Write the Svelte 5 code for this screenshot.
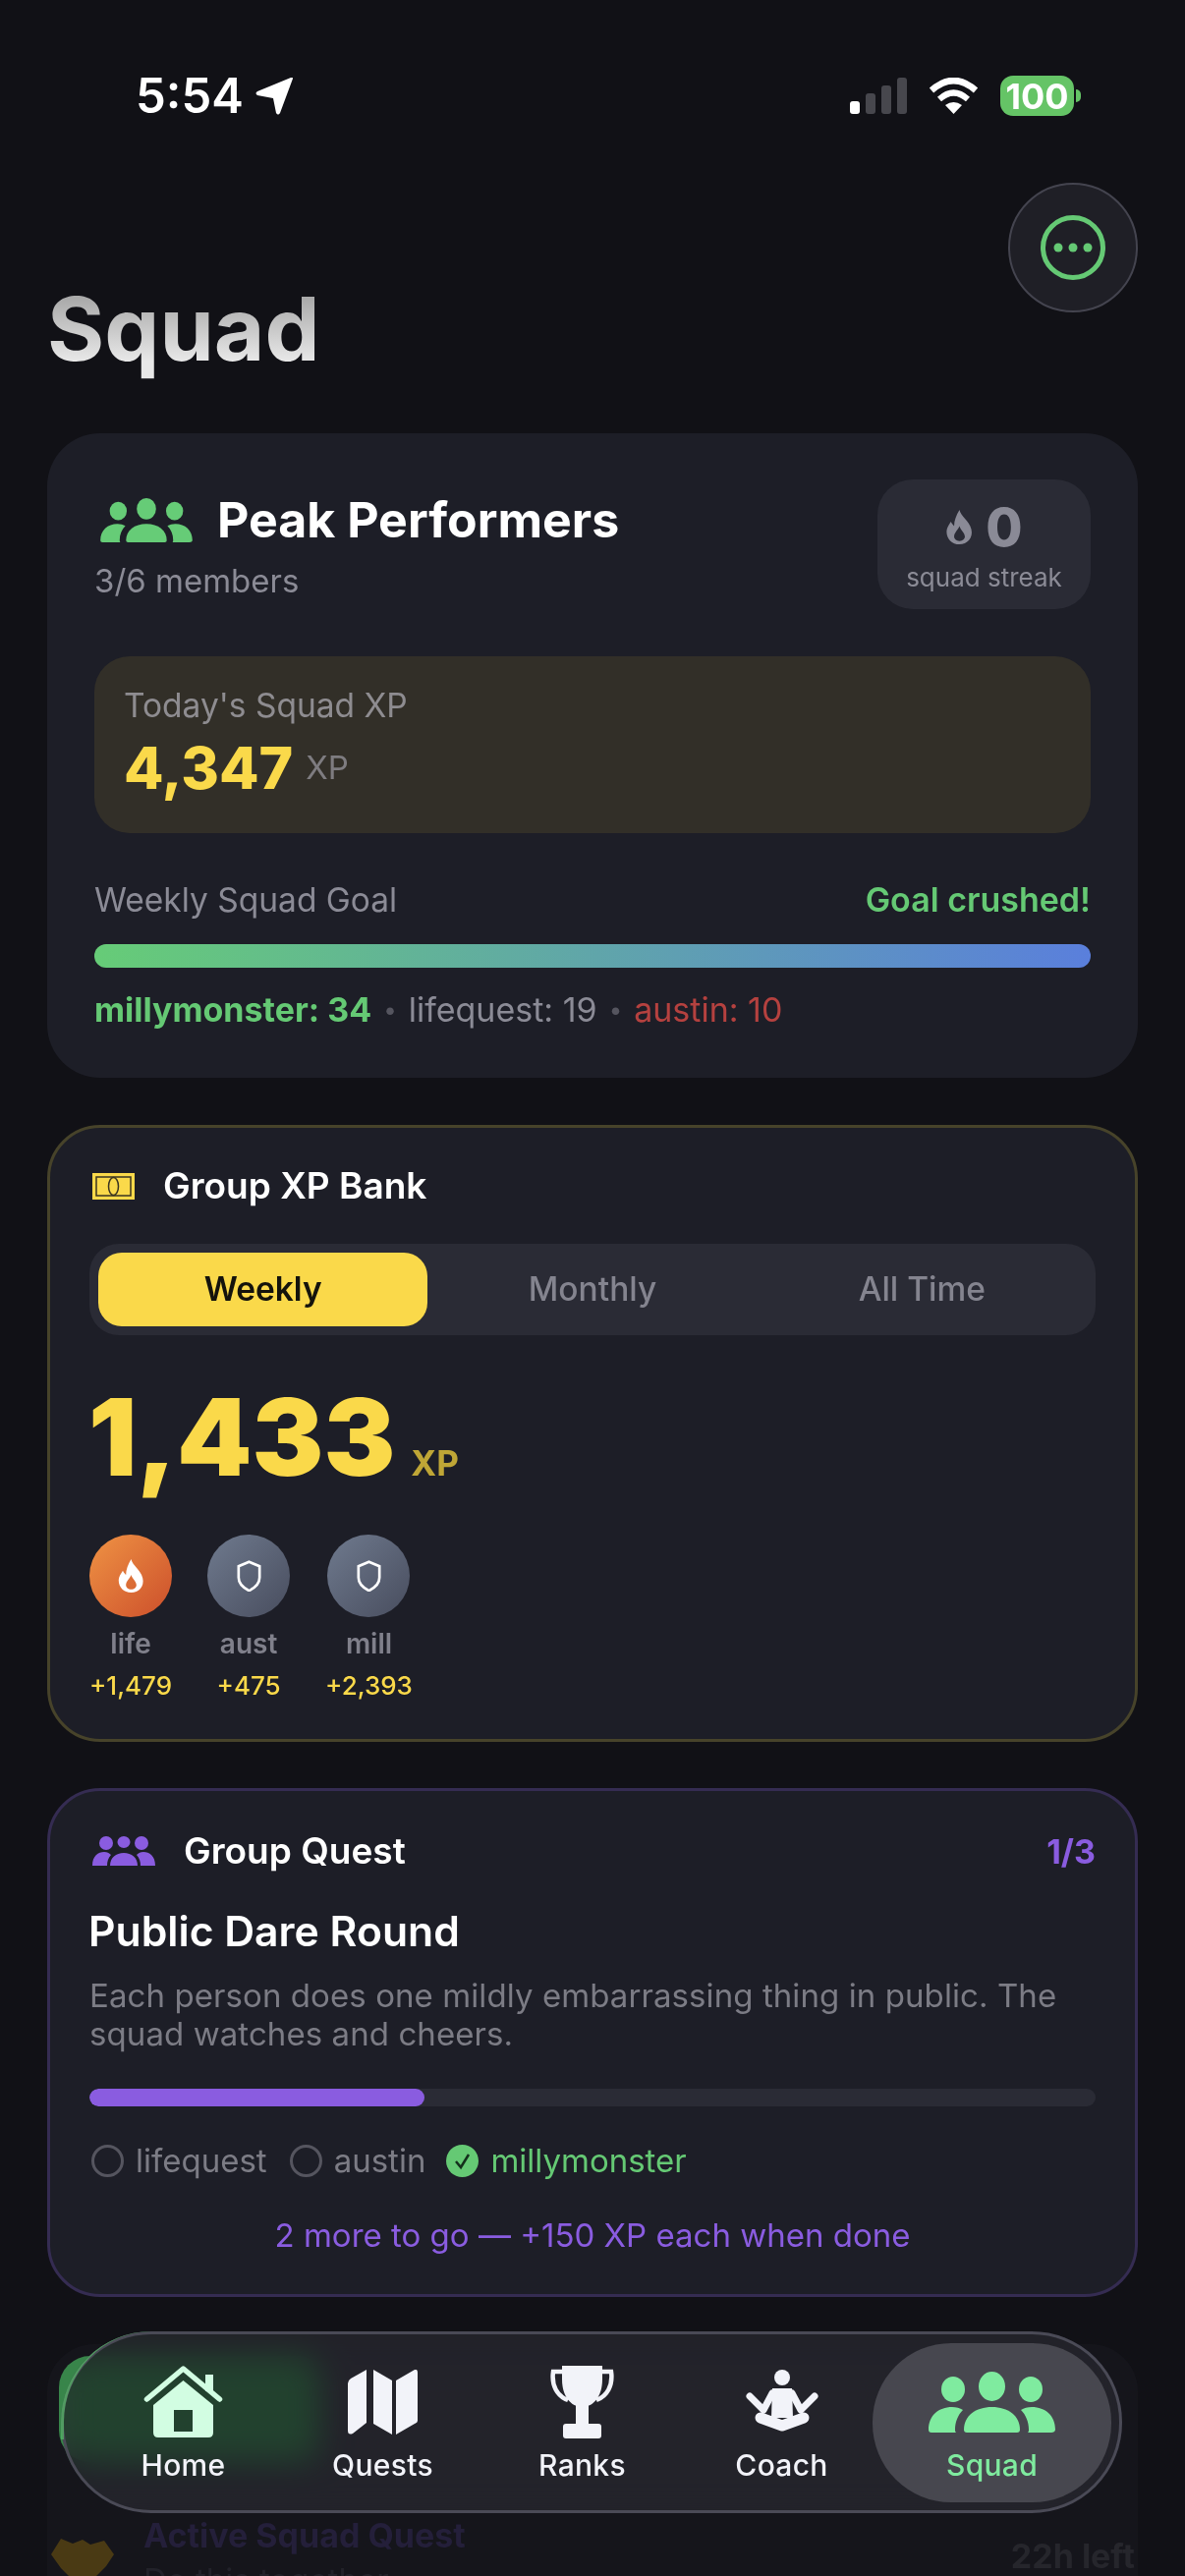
<!--
  Squad tab: status bar, header and three cards, with the floating tab bar
  over a fourth card that scrolls off underneath it.
-->
<script>
  const bankers = [
    { name: 'life', xp: '+1,479', hot: true },
    { name: 'aust', xp: '+475', hot: false },
    { name: 'mill', xp: '+2,393', hot: false },
  ];
</script>

{#snippet flame()}
  <path fill-rule="evenodd" d="M13 0c1 6 9 10 11 18 2 8-4 14-11 14S1 27 1 20c0-3 2-6 4-9 1 2 2 3 3 4 0-5 2-10 5-15zM13 15c-1 3-5 6-5 10 0 2 2 4 5 4s5-2 5-4c0-4-4-6-5-10z" />
{/snippet}

{#snippet people()}
  <ellipse cx="25" cy="18" rx="12" ry="13" />
  <ellipse cx="64.500" cy="15" rx="13.500" ry="15" />
  <ellipse cx="104" cy="18" rx="12" ry="13" />
  <path d="M36 59c0-14 12-23 28.500-23s28.500 9 28.500 23c0 2-1 3-3 3H39c-2 0-3-1-3-3z" />
  <path d="M0 59c0-14 10-23 24-23 4 0 8 1 11 3-5 5-8 12-8 20 0 1 0 2 1 3H3c-2 0-3-1-3-3z" />
  <path d="M129 59c0-14-10-23-24-23-4 0-8 1-11 3 5 5 8 12 8 20 0 1 0 2-1 3h24c2 0 4-1 4-3z" />
{/snippet}

<div class="screen">
  <div class="status">
    <div class="clock">
      <span>5:54</span>
      <svg width="39" height="38" viewBox="0 0 39 38" fill="#fff"><path d="M38 1 25 36q-2 3-4 0l-3-15L2 18q-3-2 0-4L36 0q2-1 2 1z" /></svg>
    </div>
    <div class="indicators">
      <div class="signal"><i class="on"></i><i></i><i></i><i></i></div>
      <svg width="51" height="37" viewBox="0 0 51 37" fill="none" stroke="#fff">
        <path d="M3 13Q25.500-7 48 13" stroke-width="6.500" />
        <path d="M11 22Q25.500 9 40 22" stroke-width="6" />
        <path d="M17 28Q25.500 22 34 28l-8.500 9z" fill="#fff" stroke="none" />
      </svg>
      <div class="battery"><span>100</span></div>
    </div>
  </div>

  <header>
    <h1>Squad</h1>
    <button class="more" aria-label="More">
      <svg width="66" height="66" viewBox="0 0 66 66">
        <circle cx="33" cy="33" r="30.500" fill="none" stroke="#65c974" stroke-width="5" />
        <circle cx="18" cy="33" r="4.500" fill="#65c974" />
        <circle cx="33" cy="33" r="4.500" fill="#65c974" />
        <circle cx="48" cy="33" r="4.500" fill="#65c974" />
      </svg>
    </button>
  </header>

  <section class="card team">
    <div class="team-top">
      <div>
        <div class="team-name">
          <svg class="peak" width="94" height="45" viewBox="0 0 129 62" fill="#66cc77">{@render people()}</svg>
          <h2>Peak Performers</h2>
        </div>
        <div class="members">3/6 members</div>
      </div>
      <div class="streak">
        <div class="streak-num">
          <svg width="29" height="35" viewBox="0 0 26 32" fill="#8a8a96">{@render flame()}</svg>
          <span>0</span>
        </div>
        <div class="streak-label">squad streak</div>
      </div>
    </div>

    <div class="today">
      <div class="today-label">Today's Squad XP</div>
      <div class="today-value"><b>4,347</b><span>XP</span></div>
    </div>

    <div class="goal-head">
      <span>Weekly Squad Goal</span>
      <b>Goal crushed!</b>
    </div>
    <div class="goal-bar"></div>
    <div class="goal-list">
      <b>millymonster: 34</b><i>•</i><span>lifequest: 19</span><i>•</i><em>austin: 10</em>
    </div>
  </section>

  <section class="card bank">
    <div class="bank-head">
      <svg width="43" height="27" viewBox="0 0 43 27">
        <rect width="43" height="27" fill="#fad94a" />
        <rect x="4" y="4" width="35" height="19" fill="none" stroke="#3a3420" stroke-width="1.500" />
        <ellipse cx="21.500" cy="13.500" rx="5" ry="9" fill="none" stroke="#3a3420" stroke-width="1.500" />
      </svg>
      <h3>Group XP Bank</h3>
    </div>
    <div class="tabs">
      <button class="active">Weekly</button>
      <button>Monthly</button>
      <button>All Time</button>
    </div>
    <div class="bank-total"><b>1,433</b><span>XP</span></div>
    <div class="bankers">
      {#each bankers as b}
        <div class="banker">
          <div class="avatar" class:hot={b.hot}>
            {#if b.hot}
              <svg width="29" height="34" viewBox="0 0 26 32" fill="#fff">{@render flame()}</svg>
            {:else}
              <svg width="27" height="32" viewBox="0 0 28 36" fill="none" stroke="#fff" stroke-width="3"><path d="M14 2l12 5v13c0 7-6 12-12 15C8 32 2 27 2 20V7z" /></svg>
            {/if}
          </div>
          <div class="banker-name">{b.name}</div>
          <div class="banker-xp">{b.xp}</div>
        </div>
      {/each}
    </div>
  </section>

  <section class="card quest">
    <div class="quest-head">
      <svg width="64" height="30" viewBox="0 0 64 30" fill="#8a5ce0">
        <ellipse cx="14" cy="7" rx="7" ry="7" />
        <ellipse cx="32" cy="6" rx="6.500" ry="6" />
        <ellipse cx="50" cy="7" rx="7" ry="7" />
        <path d="M0 30c0-10 6-14 12-14 3 0 5 1 7 3-3 3-4 7-4 11z" />
        <path d="M18 30c0-8 6-13 14-13s14 5 14 13z" />
        <path d="M64 30c0-10-6-14-12-14-3 0-5 1-7 3 3 3 4 7 4 11z" />
      </svg>
      <h3>Group Quest</h3>
      <b>1/3</b>
    </div>
    <h4>Public Dare Round</h4>
    <p>Each person does one mildly embarrassing thing in public. The squad watches and cheers.</p>
    <div class="quest-bar"><div class="quest-fill" style="width: 33.3%"></div></div>
    <div class="quest-people">
      <span class="who"><i class="ring"></i>lifequest</span>
      <span class="who"><i class="ring"></i>austin</span>
      <span class="who done">
        <svg width="33" height="33" viewBox="0 0 33 33"><circle cx="16.500" cy="16.500" r="16.500" fill="#65c974" /><path d="M10 17l5 6 8-13" fill="none" stroke="#14301c" stroke-width="2.500" /></svg>
        millymonster
      </span>
    </div>
    <div class="quest-note">2 more to go — +150 XP each when done</div>
  </section>

  <section class="active-quest">
    <div class="green-btn"></div>
    <div class="active-row">
      <svg width="64" height="44" viewBox="0 0 64 44" fill="#4a3a14"><path d="M0 18 10 2l12 5 10-4 8 5 14-4 10 14-8 12-14 14H22L10 32z" /></svg>
      <div class="active-text">
        <div class="active-title">Active Squad Quest</div>
        <div class="active-sub">Do this together</div>
      </div>
      <b>22h left</b>
    </div>
  </section>

  <nav>
    <div class="tab">
      <svg class="home" width="81" height="73" viewBox="0 0 81 73" fill="#d2fde2">
        <path d="M63 9h8v17h-8z" />
        <path d="M3.500 34 40.500 3l37 31" fill="none" stroke="#d2fde2" stroke-width="5.500" stroke-linecap="round" stroke-linejoin="round" />
        <path fill-rule="evenodd" d="M40.500 15 71 40v28q0 5-5 5H15q-5 0-5-5V40zM31 45v22h19V45z" />
      </svg>
      <span>Home</span>
    </div>
    <div class="tab">
      <svg width="71" height="66" viewBox="0 0 71 66" fill="#f2f3f9">
        <path d="M0 14q0-3 3-5L19 0v54L5 65q-5 2-5-3z" />
        <path d="M26 0l19 11v55L26 55z" />
        <path d="M49 11 68 0q3-1 3 3v49q0 2-3 3L49 66z" />
      </svg>
      <span>Quests</span>
    </div>
    <div class="tab">
      <svg width="67" height="74" viewBox="0 0 67 74" fill="#f2f3f9">
        <path d="M13 6H4C2 20 8 31 19 35M54 6h9c2 14-4 25-15 29" fill="none" stroke="#f2f3f9" stroke-width="4.500" />
        <path d="M13 0h41v14c0 17-9 28-20.500 28S13 31 13 14z" />
        <path d="M27 40h13v20H27z" />
        <rect x="14" y="59" width="39" height="15" rx="3" />
      </svg>
      <span>Ranks</span>
    </div>
    <div class="tab">
      <svg width="74" height="64" viewBox="0 0 74 64" fill="#f2f3f9">
        <ellipse cx="37" cy="8" rx="8" ry="8" />
        <path d="M4 27l14 14 9-17M70 27 56 41l-9-17" fill="none" stroke="#f2f3f9" stroke-width="7" stroke-linecap="round" stroke-linejoin="round" />
        <path d="M27 19h20l1 30H26z" />
        <path d="M15 49 37 57l22-8" fill="none" stroke="#f2f3f9" stroke-width="11" stroke-linecap="round" stroke-linejoin="round" />
      </svg>
      <span>Coach</span>
    </div>
    <div class="tab selected">
      <svg width="129" height="62" viewBox="0 0 129 62" fill="#7feb9f">{@render people()}</svg>
      <span>Squad</span>
    </div>
  </nav>
</div>

<style>
  :global(body) {
    margin: 0;
    background: #111116;
  }
  .screen {
    position: relative;
    box-sizing: border-box;
    width: 1206px;
    height: 2622px;
    overflow: hidden;
    padding: 77px 48px 0;
    background: #111116;
    font-family: Inter, "Liberation Sans", sans-serif;
    color: #fff;
  }
  h1, h2, h3, h4, p {
    margin: 0;
  }
  b, i, em {
    font-style: normal;
  }

  .status {
    display: flex;
    justify-content: space-between;
    align-items: center;
    height: 41px;
    padding: 0 58px 0 90px;
  }
  .clock {
    display: flex;
    align-items: center;
    gap: 12px;
    font-size: 49px;
    font-weight: 600;
    line-height: 41px;
  }
  .indicators {
    display: flex;
    align-items: center;
    gap: 22px;
  }
  .signal {
    display: flex;
    align-items: flex-end;
    gap: 6px;
    height: 37px;
  }
  .signal i {
    width: 10px;
    background: #47474d;
    border-radius: 3px;
  }
  .signal i:nth-child(1) { height: 13px; background: #fff; }
  .signal i:nth-child(2) { height: 21px; }
  .signal i:nth-child(3) { height: 29px; }
  .signal i:nth-child(4) { height: 37px; }
  .battery {
    position: relative;
    display: flex;
    align-items: center;
    justify-content: center;
    width: 75px;
    height: 41px;
    margin-right: 7px;
    border-radius: 13px;
    background: #65c466;
    font-size: 36px;
    font-weight: 700;
  }
  .battery::after {
    content: '';
    position: absolute;
    right: -7px;
    top: 14px;
    width: 5px;
    height: 13px;
    border-radius: 0 6px 6px 0;
    background: #65c466;
  }

  header {
    display: flex;
    justify-content: space-between;
    align-items: flex-start;
    height: 255px;
    margin-top: 68px;
  }
  h1 {
    margin-top: 96px;
    font-size: 89px;
    line-height: 1.2;
    font-weight: 700;
    background: linear-gradient(180deg, #aaaaaa 20%, #e8e8e8 80%);
    -webkit-background-clip: text;
    background-clip: text;
    color: transparent;
  }
  .more {
    display: flex;
    align-items: center;
    justify-content: center;
    box-sizing: border-box;
    width: 132px;
    height: 132px;
    padding: 0;
    border: 2px solid #44444f;
    border-radius: 50%;
    background: #1f1f26;
  }

  .card {
    box-sizing: border-box;
    background: #1d1e27;
    border-radius: 54px;
    margin-bottom: 47px;
  }

  .team {
    height: 656px;
    margin-bottom: 48px;
    padding: 47px 48px 0;
  }
  .team-top {
    display: flex;
    justify-content: space-between;
    align-items: flex-start;
  }
  .team-name {
    display: flex;
    align-items: center;
    gap: 25px;
    margin-top: 11px;
    padding-left: 6px;
  }
  h2 {
    font-size: 50px;
    line-height: 60px;
    font-weight: 700;
  }
  .members {
    margin-top: 12px;
    font-size: 33px;
    line-height: 40px;
    color: #8b8b96;
  }
  .streak {
    box-sizing: border-box;
    width: 217px;
    height: 132px;
    padding-top: 24px;
    border-radius: 36px;
    background: #2a2b35;
    text-align: center;
  }
  .streak-num {
    display: flex;
    align-items: center;
    justify-content: center;
    gap: 12px;
    height: 48px;
    font-size: 54px;
    font-weight: 800;
    color: #8a8a96;
  }
  .streak-label {
    margin-top: 12px;
    font-size: 26px;
    line-height: 32px;
    color: #8b8b96;
  }

  .today {
    box-sizing: border-box;
    height: 180px;
    margin-top: 48px;
    padding: 30px 30px;
    border-radius: 36px;
    background: #322f28;
  }
  .today-label {
    font-size: 33.500px;
    line-height: 40px;
    color: #8e8c90;
  }
  .today-value {
    display: flex;
    align-items: center;
    gap: 13px;
    margin-top: 9px;
    height: 68px;
  }
  .today-value b {
    font-size: 59px;
    font-weight: 800;
    color: #fad94a;
  }
  .today-value span {
    font-size: 33px;
    color: #7e7c80;
  }

  .goal-head {
    display: flex;
    justify-content: space-between;
    align-items: center;
    margin-top: 48px;
    font-size: 33.500px;
    line-height: 40px;
    color: #8b8b96;
  }
  .goal-head b {
    font-size: 34px;
    font-weight: 600;
    color: #65c974;
  }
  .goal-bar {
    height: 24px;
    margin-top: 25px;
    border-radius: 12px;
    background: linear-gradient(90deg, #66cc77, #5a7fdc);
  }
  .goal-list {
    display: flex;
    align-items: center;
    gap: 12px;
    margin-top: 23px;
    font-size: 34px;
    line-height: 40px;
    color: #8b8b96;
  }
  .goal-list b {
    font-weight: 700;
    color: #65c974;
  }
  .goal-list i {
    font-size: 24px;
    color: #55555f;
  }
  .goal-list em {
    color: #b5413f;
  }

  .bank {
    height: 628px;
    padding: 44px 40px 0;
    border: 3px solid #47432a;
  }
  .bank-head {
    display: flex;
    align-items: center;
    gap: 29px;
    height: 30px;
    padding-left: 3px;
  }
  h3 {
    font-size: 37px;
    font-weight: 600;
    line-height: 44px;
  }
  .tabs {
    display: grid;
    grid-template-columns: repeat(3, 1fr);
    height: 93px;
    box-sizing: border-box;
    margin-top: 44px;
    padding: 9px;
    border-radius: 30px;
    background: #2a2b35;
  }
  .tabs button {
    border: 0;
    padding: 0 0 2px;
    border-radius: 24px;
    background: none;
    font: inherit;
    font-size: 33.500px;
    font-weight: 500;
    color: #84848f;
  }
  .tabs .active {
    background: #fad94a;
    color: #14130c;
    font-weight: 600;
  }
  .bank-total {
    display: flex;
    align-items: baseline;
    gap: 16px;
    margin-top: 38px;
    line-height: 130px;
  }
  .bank-total b {
    font-size: 109px;
    font-weight: 900;
    margin-left: -1px;
    color: #fad94a;
  }
  .bank-total span {
    font-size: 35px;
    font-weight: 700;
    color: #bfa636;
  }
  .bankers {
    display: flex;
    gap: 36px;
    margin-top: 8px;
  }
  .banker {
    display: flex;
    flex-direction: column;
    align-items: center;
    min-width: 84px;
  }
  .avatar {
    display: flex;
    align-items: center;
    justify-content: center;
    width: 84px;
    height: 84px;
    border-radius: 50%;
    background: linear-gradient(135deg, #6f7a8e, #484d5e);
  }
  .avatar.hot {
    background: linear-gradient(135deg, #ef9344, #cc4f2b);
  }
  .banker-name {
    margin-top: 10px;
    font-size: 28px;
    font-weight: 600;
    line-height: 34px;
    color: #80808b;
  }
  .banker-xp {
    margin-top: 10px;
    font-size: 26px;
    font-weight: 500;
    line-height: 32px;
    color: #fad94a;
  }

  .quest {
    height: 518px;
    margin-bottom: 48px;
    padding: 39px 40px 0;
    border: 3px solid #352c52;
  }
  .quest-head {
    display: flex;
    align-items: center;
    height: 44px;
    padding-left: 3px;
  }
  .quest-head h3 {
    margin-left: 29px;
  }
  .quest-head b {
    margin-left: auto;
    font-size: 34px;
    font-weight: 700;
    color: #8a5ce0;
  }
  h4 {
    margin-top: 34px;
    margin-left: -1px;
    font-size: 42.700px;
    font-weight: 600;
    line-height: 52px;
  }
  .quest p {
    margin-top: 20px;
    font-size: 33px;
    letter-spacing: 0.08px;
    line-height: 39px;
    color: #7c7c85;
  }
  .quest-bar {
    height: 18px;
    margin-top: 36px;
    border-radius: 9px;
    background: #2a2b35;
    overflow: hidden;
  }
  .quest-fill {
    height: 100%;
    border-radius: 9px;
    background: #8a5ce0;
  }
  .quest-people {
    display: flex;
    align-items: center;
    gap: 21px;
    margin-top: 35px;
    font-size: 33px;
    line-height: 40px;
    color: #7c7c85;
  }
  .who {
    display: flex;
    align-items: center;
    gap: 12px;
  }
  .ring {
    box-sizing: border-box;
    width: 33px;
    height: 33px;
    margin-left: 2px;
    border: 3px solid #55555f;
    border-radius: 50%;
  }
  .done {
    color: #65c974;
  }
  .quest-note {
    margin-top: 36px;
    font-size: 33px;
    line-height: 40px;
    text-align: center;
    color: #8a5ce0;
  }

  .active-quest {
    box-sizing: border-box;
    height: 300px;
    padding: 12px 3px 0 4px;
    border-radius: 48px 48px 0 0;
    background: #15151b;
  }
  .green-btn {
    width: 265px;
    height: 108px;
    margin-left: 8px;
    border-radius: 32px 20px 20px 32px;
    background: #38854a;
  }
  .active-row {
    display: flex;
    align-items: flex-start;
    gap: 30px;
    margin-top: 53px;
  }
  .active-row svg {
    margin-top: 23px;
  }
  .active-text {
    flex: 1;
  }
  .active-title {
    font-size: 34px;
    font-weight: 700;
    line-height: 44px;
    color: #241f3a;
  }
  .active-sub {
    margin-top: 3px;
    font-size: 33px;
    line-height: 40px;
    color: #22222a;
  }
  .active-row b {
    margin-top: 22px;
    font-size: 34px;
    font-weight: 700;
    color: #26262c;
  }

  nav {
    position: absolute;
    left: 62px;
    top: 2373px;
    box-sizing: border-box;
    display: flex;
    align-items: center;
    width: 1080px;
    height: 185px;
    padding: 0 8px 0 20px;
    border: 3px solid #4a4a56;
    border-radius: 92px;
    background: rgba(40, 40, 46, 0.76);
    backdrop-filter: blur(16px) saturate(170%);
  }
  /* the green behind the bar catches the glass edge at top left */
  nav::before {
    content: '';
    position: absolute;
    top: -3px;
    left: -3px;
    box-sizing: border-box;
    width: 100px;
    height: 110px;
    border-left: 3px solid rgba(86, 190, 104, 0.7);
    border-radius: 92px 0 0 0;
  }
  .tab {
    flex: none;
    display: flex;
    flex-direction: column;
    align-items: center;
    justify-content: flex-end;
    width: 203px;
    height: 122px;
    font-size: 30px;
    font-weight: 500;
    letter-spacing: 0.3px;
    line-height: 36px;
    color: #f2f3f9;
  }
  .tab svg {
    flex: none;
    margin-bottom: 10px;
  }
  .tab:nth-child(2) svg { margin-bottom: 13px; }
  .tab:nth-child(3) svg { margin-bottom: 9px; }
  .tab:nth-child(4) svg { margin-bottom: 15px; }
  .tab.selected svg { margin-bottom: 15px; }
  .selected {
    width: 243px;
    height: 162px;
    margin-left: -9px;
    padding-bottom: 20px;
    box-sizing: border-box;
    border-radius: 80px;
    background: #47474f;
    color: #7feb9f;
  }
</style>
